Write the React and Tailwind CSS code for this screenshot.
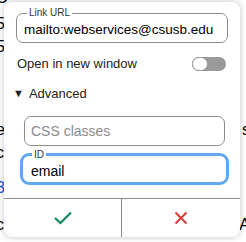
import { useState } from "react";

function Toggle() {
  return (
    <div className="relative h-[14px] w-[34px] rounded-full bg-[#9a9a9a]">
      <div className="absolute left-0 top-0 h-[14px] w-[16px] rounded-full border border-[#9a9a9a] bg-white" />
    </div>
  );
}

export default function App() {
  const [url, setUrl] = useState("mailto:webservices@csusb.edu");
  const [id, setId] = useState("email");

  return (
    <div
      className="relative h-[242px] w-[246px] overflow-hidden bg-white text-black"
      style={{ fontFamily: '"Liberation Sans", Arial, sans-serif' }}
    >
      {/* page content behind the popup */}
      <div className="flex flex-col text-[16px] leading-[23px] ml-[-4px] mt-[-14px]">
        <p>C</p>
        <p className="mt-[3px]">5</p>
        <p>5</p>
        <p>&nbsp;</p>
        <p>&nbsp;</p>
        <p className="mt-[14px] flex justify-between">
          <span>e</span>
          <span className="mr-[-4px]">s</span>
        </p>
        <p>c</p>
        <p className="mt-[12px] text-[#1a5fd6]">3</p>
        <p className="mt-[14px] flex justify-between">
          <span>c</span>
          <span className="ml-[60px]">(y)</span>
          <span className="ml-auto mr-[-4px]">A</span>
        </p>
      </div>

      {/* link popup */}
      <div className="absolute left-[4px] top-[2px] flex h-[235px] w-[236px] flex-col rounded-lg bg-white shadow-[0_0_6px_rgba(0,0,0,0.25)]">
        <div className="flex flex-col px-[12px] pt-[11px]">
          <div className="relative flex h-[30px] items-center rounded-[7px] border border-[#8c8c8c]">
            <span className="absolute left-[10px] top-[-6px] bg-white px-[2px] text-[10px] leading-[10px] text-[#333]">
              Link URL
            </span>
            <input
              value={url}
              onChange={(e) => setUrl(e.target.value)}
              className="mt-[4px] w-full min-w-0 bg-transparent pl-[7px] pr-[2px] text-[13.5px] leading-[18px] text-black outline-none"
            />
          </div>

          <div className="mt-[11px] flex items-center justify-between pl-[1px] pr-[2px]">
            <span className="text-[13px] text-[#222]">Open in new window</span>
            <Toggle />
          </div>

          <div className="mt-[10px] ml-[-3px] flex items-center gap-[5px] text-[13px] text-[#222]">
            <span className="text-[11px]">▼</span>
            <span>Advanced</span>
          </div>

          <div className="mt-[13px] flex flex-col gap-[7px] pl-[8px] pr-[3px]">
            <div className="flex h-[30px] items-center rounded-[7px] border border-[#8c8c8c] px-[6px]">
              <input
                placeholder="CSS classes"
                className="w-full bg-transparent text-[14px] text-black outline-none placeholder:text-[#8a8a8a]"
              />
            </div>
            <div className="relative mx-[-4px] flex h-[32px] items-center rounded-[9px] border-[3px] border-[#62a8ee]">
              <span className="absolute left-[9px] top-[-6px] bg-white px-[2px] text-[10px] leading-[10px] text-[#333]">
                ID
              </span>
              <input
                value={id}
                onChange={(e) => setId(e.target.value)}
                className="mt-[3px] w-full bg-transparent px-[8px] text-[14px] leading-[18px] text-black outline-none"
              />
            </div>
          </div>
        </div>

        <div className="mt-auto grid h-[39px] grid-cols-2 border-t border-[#8c8c8c]">
          <button className="flex items-center justify-center border-r border-[#8c8c8c]">
            <svg width="20" height="14" viewBox="0 0 20 14" fill="none">
              <path d="M2 7 L7.5 12 L18 1.5" stroke="#138a5a" strokeWidth="2.2" />
            </svg>
          </button>
          <button className="flex items-center justify-center">
            <svg width="14" height="14" viewBox="0 0 14 14" fill="none">
              <path d="M1.5 1.5 L12.5 12.5 M12.5 1.5 L1.5 12.5" stroke="#d93b3b" strokeWidth="2" />
            </svg>
          </button>
        </div>
      </div>
    </div>
  );
}
